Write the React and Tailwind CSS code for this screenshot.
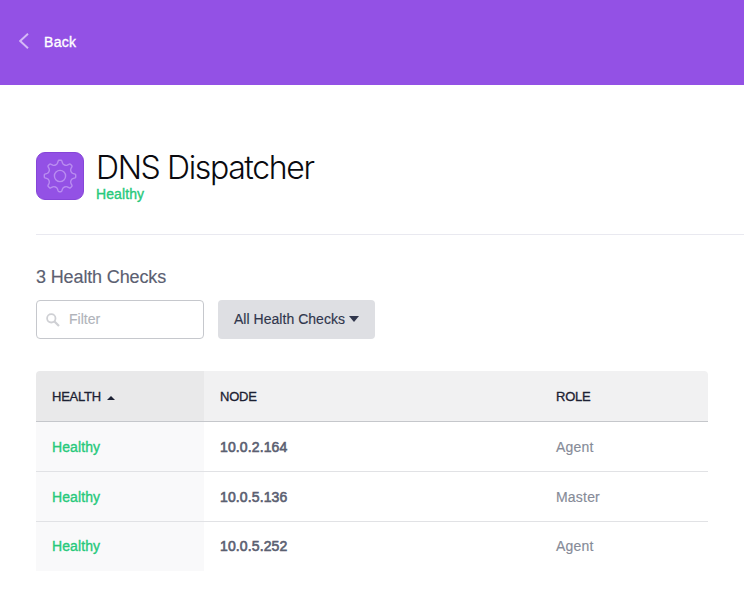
const rows = [
  { health: "Healthy", node: "10.0.2.164", role: "Agent" },
  { health: "Healthy", node: "10.0.5.136", role: "Master" },
  { health: "Healthy", node: "10.0.5.252", role: "Agent" },
];

// Outline of an eight-toothed gear centred on the origin.
function gearPath() {
  const at = (x, y, i) => {
    const a = (i * Math.PI) / 4;
    const px = x * Math.cos(a) - y * Math.sin(a);
    const py = x * Math.sin(a) + y * Math.cos(a);
    return `${px.toFixed(2)} ${py.toFixed(2)}`;
  };
  let d = "";
  for (let i = 0; i < 8; i++) {
    d += `${i === 0 ? "M" : "L"}${at(-2.6, -12.8, i)}`;
    d += `L${at(-1.8, -15.1, i)}Q${at(-1.6, -15.7, i)} ${at(-0.9, -15.7, i)}`;
    d += `L${at(0.9, -15.7, i)}Q${at(1.6, -15.7, i)} ${at(1.8, -15.1, i)}`;
    d += `L${at(2.6, -12.8, i)}`;
    d += `C${at(3.2, -11.2, i)} ${at(-3.2, -11.2, i + 1)} ${at(-2.6, -12.8, i + 1)}`;
  }
  return d + "Z";
}

export default function App() {
  return (
    <div className="h-[605px] w-full overflow-hidden bg-white text-[14px] font-['Liberation_Sans',Arial,sans-serif]">
      <header className="flex h-[85px] items-center bg-[#9351e5] pb-[3px] pl-[19px] text-white">
        <svg width="10" height="16" viewBox="0 0 10 16" fill="none" stroke="#d5b9f6" strokeWidth="1.9">
          <path d="M9 0.7L1.2 8L9 15.3" />
        </svg>
        <span className="ml-[15px] mt-[3px] tracking-[0.3px] [-webkit-text-stroke:0.35px_white]">Back</span>
      </header>

      <main className="pl-9">
        <section className="flex h-[150px] border-b border-[#e9e9f0] pt-[67px]">
          <div className="flex size-12 items-center justify-center rounded-[9px] border border-[#8646d8] bg-[#9351e5]">
            <svg width="36" height="36" viewBox="-18 -18 36 36" fill="none" stroke="#b98cf0" strokeWidth="1.4">
              <path d={gearPath()} />
              <circle r="5.6" />
            </svg>
          </div>
          <div className="ml-3">
            <h1 className="h-8 whitespace-nowrap font-['Inter',sans-serif] text-[32px] font-light leading-[32px] tracking-[-1.37px] text-[#0a0a0f]">
              DNS Dispatcher
            </h1>
            <p className="mt-px leading-[18px] tracking-[0.1px] text-[#27c97b] [-webkit-text-stroke:0.35px_#27c97b]">Healthy</p>
          </div>
        </section>

        <h2 className="mt-8 text-[18px] leading-5 tracking-[-0.13px] text-[#5b6071] [-webkit-text-stroke:0.15px_#5b6071]">3 Health Checks</h2>

        <div className="mt-[13px] flex gap-[14px]">
          <div className="flex h-[39px] w-[168px] items-center rounded border border-[#c6c8cd] pl-[9px]">
            <svg width="14" height="14" viewBox="0 0 14 14" fill="none" stroke="#cfd0d4" strokeWidth="1.8">
              <circle cx="5.3" cy="5.3" r="4.2" />
              <path d="M8.5 8.5L13 13" strokeWidth="2.2" />
            </svg>
            <span className="ml-[9px] text-[#b0b3ba] [-webkit-text-stroke:0.15px_#b0b3ba]">Filter</span>
          </div>
          <button className="flex h-[39px] w-[157px] items-center rounded bg-[#dedfe3] pl-4 text-[#30364c]">
            <span className="whitespace-nowrap tracking-[0.03px] [-webkit-text-stroke:0.15px_#30364c]">All Health Checks</span>
            <svg className="ml-1 -mt-px" width="10" height="6" viewBox="0 0 10 6" fill="#30364c">
              <path d="M0 0H10L5 6Z" />
            </svg>
          </button>
        </div>

        <table className="mt-8 w-[672px] table-fixed border-separate border-spacing-0 text-left">
          <colgroup>
            <col className="w-[168px]" />
            <col className="w-[336px]" />
            <col className="w-[168px]" />
          </colgroup>
          <thead className="text-[13px] text-[#1c2133] [-webkit-text-stroke:0.3px_#1c2133]">
            <tr className="h-[51px]">
              <th className="rounded-tl border-b border-[#c5c7cb] bg-[#e9e9ea] pb-0 pl-4 pr-0 pt-[2px] font-normal">
                <span className="flex items-center">
                  <span className="tracking-[-0.25px]">HEALTH</span>
                  <svg className="ml-[6px] mt-px" width="8" height="4" viewBox="0 0 8 4" fill="#1c2133">
                    <path d="M0 4H8L4 0Z" />
                  </svg>
                </span>
              </th>
              <th className="border-b border-[#c5c7cb] bg-[#f1f1f2] pb-0 pl-4 pr-0 pt-[2px] font-normal tracking-[-0.25px]">NODE</th>
              <th className="rounded-tr border-b border-[#c5c7cb] bg-[#f1f1f2] pb-0 pl-4 pr-0 pt-[2px] font-normal tracking-[-0.25px]">ROLE</th>
            </tr>
          </thead>
          <tbody className="[&>tr:not(:last-child)>td]:border-b [&>tr:not(:last-child)>td]:pt-[2px] [&>tr>td]:border-[#e1e2e5]">
            {rows.map((row) => (
              <tr key={row.node} className="h-[50px] last:h-[49px]">
                <td className="bg-[#f9f9fa] pl-4 tracking-[0.1px] text-[#27c97b] [-webkit-text-stroke:0.35px_#27c97b]">{row.health}</td>
                <td className="pl-4 tracking-[0.12px] text-[#5b6071] [-webkit-text-stroke:0.6px_#5b6071]">{row.node}</td>
                <td className="pl-4 tracking-[0.2px] text-[#868b98] [-webkit-text-stroke:0.15px_#868b98]">{row.role}</td>
              </tr>
            ))}
          </tbody>
        </table>
      </main>
    </div>
  );
}
